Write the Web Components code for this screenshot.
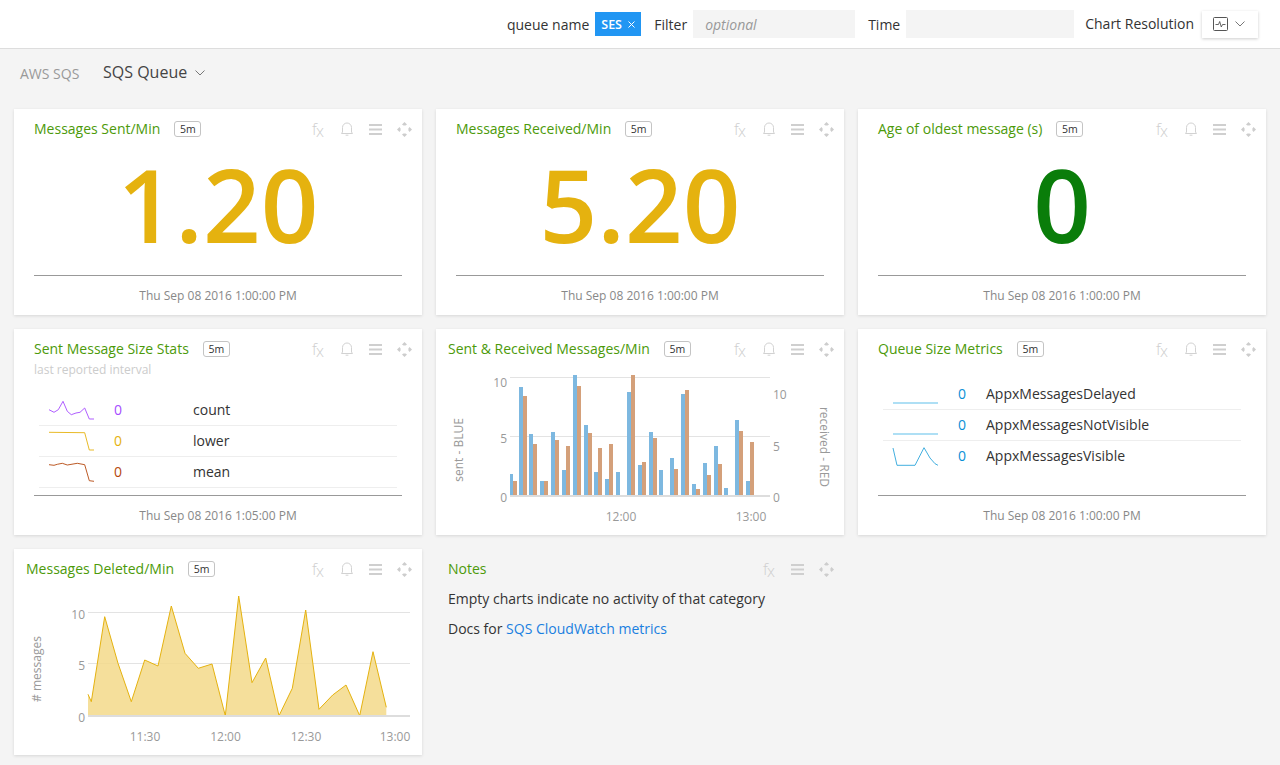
<!DOCTYPE html>
<html>
<head>
<meta charset="utf-8">
<title>SQS Queue</title>
<style>
html, body { margin: 0; padding: 0; background: #f4f4f4; }
body { font-family: "Open Sans", sans-serif; font-size: 14px; color: #333; }
</style>
</head>
<body>
<top-bar></top-bar>
<crumb-bar></crumb-bar>
<dash-grid>
  <dash-card name="Messages Sent/Min" inset="20" badge="5m" footer="Thu Sep 08 2016 1:00:00 PM"><stat-value color="#e5b20f">1.20</stat-value></dash-card>
  <dash-card name="Messages Received/Min" inset="20" badge="5m" footer="Thu Sep 08 2016 1:00:00 PM"><stat-value color="#e5b20f">5.20</stat-value></dash-card>
  <dash-card name="Age of oldest message (s)" inset="20" badge="5m" footer="Thu Sep 08 2016 1:00:00 PM"><stat-value color="#0a7d0a">0</stat-value></dash-card>

  <dash-card name="Sent Message Size Stats" inset="20" badge="5m" footer="Thu Sep 08 2016 1:05:00 PM" subtitle="last reported interval">
    <spark-table top="15" value-col="79">
      <spark-row color="#a64dff" value="0" label="count" points="0,15.7 5,18.3 9.3,15.7 14,7.3 18.3,17.3 22.3,20.7 27,19 31,18.3 35.7,14 40.3,25 45,25"></spark-row>
      <spark-row color="#e5b20f" value="0" label="lower" points="0,7.3 35.7,7.7 40.3,25 45,25"></spark-row>
      <spark-row color="#b5480e" value="0" label="mean" points="0,8.7 5,9.3 8.3,8.3 13.3,7.3 18.3,9 28.3,7.3 35.7,8.7 40.3,24.7 45,25.3"></spark-row>
    </spark-table>
  </dash-card>
  <dash-card name="Sent &amp; Received Messages/Min" inset="12" badge="5m"><bar-chart></bar-chart></dash-card>
  <dash-card name="Queue Size Metrics" inset="20" badge="5m" footer="Thu Sep 08 2016 1:00:00 PM">
    <spark-table top="20" value-col="28">
      <spark-row color="#0a8fd6" line="#4db8e8" value="0" label="AppxMessagesDelayed" points="0,25 45,25"></spark-row>
      <spark-row color="#0a8fd6" line="#4db8e8" value="0" label="AppxMessagesNotVisible" points="0,25 45,25"></spark-row>
      <spark-row color="#0a8fd6" line="#2fa6dc" value="0" label="AppxMessagesVisible" last points="0,8 4,25.3 22,25.3 31,7.7 37,18 42,23.7 45,25.3"></spark-row>
    </spark-table>
  </dash-card>

  <dash-card name="Messages Deleted/Min" inset="12" badge="5m"><area-chart></area-chart></dash-card>
  <dash-card name="Notes" inset="12" plain>
    <div style="padding:0 12px;line-height:20px;color:#333">
      <div style="margin-top:10px">Empty charts indicate no activity of that category</div>
      <div style="margin-top:10px">Docs for <a href="#" style="color:#1a7fe0;text-decoration:none">SQS CloudWatch metrics</a></div>
    </div>
  </dash-card>
</dash-grid>

<script>
// chevron used in a couple of places
const chevron = (w, h) => `<svg width="${w}" height="${h}" viewBox="0 0 10 6" fill="none" stroke="#777" stroke-width="1"><path d="M.5.5 5 5 9.5.5"/></svg>`;

class TopBar extends HTMLElement {
  constructor() {
    super();
    this.attachShadow({ mode: 'open' });
  }

  connectedCallback() {
    this.shadowRoot.innerHTML = `
    <style>
    :host { display: flex; height: 48px; background: #fff; border-bottom: 1px solid #ddd; align-items: center; justify-content: flex-end; padding-right: 22px; box-sizing: content-box; color: #333; font-size: 14px; }
    .lbl { margin-right: 6px; }
    .chip { display: flex; align-items: center; gap: 6px; width: 46px; height: 24px; box-sizing: border-box; padding-left: 6px; background: #2196f3; color: #fff; font-size: 12.5px; font-weight: 600; margin-right: 13px; }
    .box { height: 28px; background: #f4f4f4; box-sizing: border-box; padding-left: 12px; line-height: 30px; color: #999; font-style: italic; }
    .btn { display: flex; align-items: center; gap: 7px; width: 56px; height: 27px; margin-left: 8px; box-sizing: border-box; padding-left: 11px; background: #fff; box-shadow: 0 1px 3px rgba(0,0,0,.2); }
    .res { position: relative; top: -1px; }
    </style>
    <span class="lbl">queue name</span>
    <span class="chip">SES <svg width="7" height="7" viewBox="0 0 7 7" stroke="#fff" stroke-width="1"><path d="M.5.5l6 6M6.500.5l-6 6"/></svg></span>
    <span class="lbl">Filter</span>
    <div class="box" style="width:162px;margin-right:13px">optional</div>
    <span class="lbl">Time</span>
    <div class="box" style="width:168px;margin-right:11px"></div>
    <span class="res">Chart Resolution</span>
    <div class="btn">
      <svg width="15" height="14" viewBox="0 0 15 14" fill="none" stroke="#555"><rect x=".5" y=".5" width="14" height="13" rx="1"/><path d="M2.500 7.500h3l1.200-3 1.600 5.500 1.200-2.500h3" stroke-width=".9"/></svg>
      ${chevron(10, 6)}
    </div>`;
  }
}

class CrumbBar extends HTMLElement {
  constructor() {
    super();
    this.attachShadow({ mode: 'open' });
  }

  connectedCallback() {
    this.shadowRoot.innerHTML = `
    <style>
    :host { display: flex; align-items: center; height: 46px; padding: 1px 0 13px 20px; box-sizing: content-box; }
    .root { color: #999; font-size: 14px; margin-right: 23px; width: 60px; }
    .page { color: #444; font-size: 16px; margin-right: 8px; position: relative; top: -1px; }
    </style>
    <span class="root">AWS SQS</span>
    <span class="page">SQS Queue</span>
    ${chevron(10, 6)}`;
  }
}

class DashGrid extends HTMLElement {
  constructor() {
    super();
    this.attachShadow({ mode: 'open' });
  }

  connectedCallback() {
    this.shadowRoot.innerHTML = `
    <style>
    :host { display: grid; grid-template-columns: repeat(3, 408px); grid-auto-rows: 206px; gap: 14px; padding: 0 14px 10px; }
    </style>
    <slot></slot>`;
  }
}

class DashCard extends HTMLElement {
  constructor() {
    super();
    this.attachShadow({ mode: 'open' });
  }

  connectedCallback() {
    const inset = this.getAttribute('inset') || 20;
    const plain = this.hasAttribute('plain');
    const badge = this.getAttribute('badge');
    const footer = this.getAttribute('footer');
    const subtitle = this.getAttribute('subtitle');
    this.shadowRoot.innerHTML = `
    <style>
    :host { display: flex; flex-direction: column; min-width: 0; background: ${plain ? 'transparent' : '#fff'}; ${plain ? '' : 'box-shadow: 0 1px 3px rgba(0,0,0,.12);'} }
    .head { display: flex; align-items: center; height: 20px; padding: 10px 0 0 ${inset}px; flex: none; }
    .name { color: #4c9a0a; font-size: 14px; line-height: 20px; white-space: nowrap; }
    .badge { margin-left: 14px; width: 27px; height: 16px; box-sizing: border-box; border: 1px solid #c4c4c4; border-radius: 3px; font-size: 10.5px; line-height: 14px; text-align: center; color: #333; }
    .tools { margin-left: auto; margin-right: 3px; display: flex; align-items: center; }
    .tool { width: 29px; height: 20px; display: flex; align-items: center; justify-content: center; }
    .menu { padding-right: 1px; box-sizing: border-box; }
    .fx { color: #cfcfcf; font-size: 16px; font-weight: 300; padding-left: 1px; box-sizing: border-box; }
    .fx i { font-style: normal; position: relative; top: 2px; margin-left: -1px; }
    .sub { padding: 1px 0 0 ${inset}px; color: #ccc; font-size: 12px; line-height: 20px; flex: none; }
    .body { flex: 1; min-height: 0; display: flex; flex-direction: column; }
    .foot { flex: none; height: 40px; margin: 0 ${inset}px; border-top: 1px solid #999; box-sizing: border-box; font-size: 12px; line-height: 39px; color: #888; text-align: center; }
    </style>
    <div class="head">
      <span class="name">${this.getAttribute('name')}</span>
      ${badge ? `<span class="badge">${badge}</span>` : ''}
      <div class="tools">
        <span class="tool fx">f<i>x</i></span>
        ${plain ? '' : `<span class="tool"><svg width="12" height="14" viewBox="0 0 12 14" fill="none" stroke="#d2d2d2"><path d="M1.500 10V5.500a4.500 4.500 0 0 1 9 0V10l1 1.500H.5zM4.600 13.200h2.800"/></svg></span>`}
        <span class="tool menu"><svg width="13" height="11" viewBox="0 0 13 11" fill="#cfcfcf"><rect width="13" height="2"/><rect y="4.500" width="13" height="2"/><rect y="9" width="13" height="2"/></svg></span>
        <span class="tool"><svg width="15" height="15" viewBox="0 0 15 15" fill="#cdcdcd"><path d="M7.500 0 10 2.500 8.500 3.600h-2L5 2.500zM7.500 15 5 12.500l1.500-1.100h2l1.500 1.100zM0 7.500 2.500 5l1.100 1.500v2L2.500 10zM15 7.500 12.500 10l-1.100-1.500v-2L12.500 5z"/></svg></span>
      </div>
    </div>
    ${subtitle ? `<div class="sub">${subtitle}</div>` : ''}
    <div class="body"><slot></slot></div>
    ${footer ? `<div class="foot">${footer}</div>` : ''}`;
  }
}

class StatValue extends HTMLElement {
  constructor() {
    super();
    this.attachShadow({ mode: 'open' });
  }

  connectedCallback() {
    this.shadowRoot.innerHTML = `
    <style>
    :host { flex: 1; display: flex; align-items: center; justify-content: center; padding-bottom: 6px; color: ${this.getAttribute('color')}; font-size: 101px; font-weight: 600; line-height: 101px; }
    </style>
    <slot></slot>`;
  }
}

class SparkTable extends HTMLElement {
  constructor() {
    super();
    this.attachShadow({ mode: 'open' });
  }

  connectedCallback() {
    this.shadowRoot.innerHTML = `
    <style>
    :host { display: block; margin: ${this.getAttribute('top')}px 25px 0; --value-col: ${this.getAttribute('value-col')}px; }
    </style>
    <slot></slot>`;
  }
}

class SparkRow extends HTMLElement {
  constructor() {
    super();
    this.attachShadow({ mode: 'open' });
  }

  connectedCallback() {
    const color = this.getAttribute('color');
    const line = this.getAttribute('line') || color;
    const last = this.hasAttribute('last');
    this.shadowRoot.innerHTML = `
    <style>
    :host { display: grid; grid-template-columns: 75px var(--value-col) 1fr; align-items: center; height: 31px; padding-bottom: ${last ? 2 : 1}px; box-sizing: border-box; ${last ? '' : 'border-bottom: 1px solid #eee;'} }
    svg { margin-left: 10px; display: block; overflow: visible; opacity: .9; margin-block: -1px; }
    .val { color: ${color}; }
    .lbl { color: #333; }
    </style>
    <svg width="45" height="31" viewBox="0 0 45 31" fill="none" stroke="${line}" stroke-width="1"><polyline points="${this.getAttribute('points')}"/></svg>
    <span class="val">${this.getAttribute('value')}</span>
    <span class="lbl">${this.getAttribute('label')}</span>`;
  }
}

const axisStyle = `
    :host { display: block; }
    svg { display: block; }
    text { font-family: "Open Sans", sans-serif; font-size: 12px; fill: #999; dominant-baseline: central; }`;

class BarChart extends HTMLElement {
  constructor() {
    super();
    this.attachShadow({ mode: 'open' });
  }

  connectedCallback() {
    // [x, top of blue, top of orange], read off the 3x crop
    const data = [[219,342,363],[249,81,108],[279,222,252],[312,363,363],[345,216,240],[378,330,258],[411,45,78],[444,195,219],[474,336,264],[507,357,252],[540,336,0],[573,96,45],[606,315,306],[639,216,234],[669,330,0],[702,294,327],[735,102,90],[768,372,387],[801,309,345],[834,258,312],[864,384,0],[897,180,213],[930,363,246]];
    const base = 405 / 3 + 1;
    let bars = '';
    data.forEach(([x, b, o]) => {
      const bx = Math.max(x / 3, 74);
      const bw = x / 3 + 4 - bx;
      bars += `<rect x="${bx}" y="${b / 3 + 1}" width="${bw}" height="${base - b / 3 - 1}" fill="#7db8e0"/>`;
      if (o) bars += `<rect x="${x / 3 + 4}" y="${o / 3 + 1}" width="4" height="${base - o / 3 - 1}" fill="#d4a07a"/>`;
    });
    this.shadowRoot.innerHTML = `
    <style>${axisStyle}</style>
    <svg width="408" height="176" viewBox="0 0 408 176">
      <path d="M74 18.5h260M74 77.5h260" stroke="#e3e3e3"/>
      ${bars}
      <path d="M74 137h260" stroke="#ddd" stroke-width="2"/>
      <text x="71" y="23" text-anchor="end">10</text>
      <text x="71" y="79" text-anchor="end">5</text>
      <text x="71" y="138" text-anchor="end">0</text>
      <text x="337" y="35">10</text>
      <text x="337" y="87">5</text>
      <text x="337" y="138">0</text>
      <text x="185" y="157" text-anchor="middle">12:00</text>
      <text x="315" y="157" text-anchor="middle">13:00</text>
      <text transform="translate(22 91) rotate(-90)" text-anchor="middle">sent - BLUE</text>
      <text transform="translate(388 88) rotate(90)" text-anchor="middle">received - RED</text>
    </svg>`;
  }
}

class AreaChart extends HTMLElement {
  constructor() {
    super();
    this.attachShadow({ mode: 'open' });
  }

  connectedCallback() {
    const pts = [[222,433],[232,455],[272,200],[312,340],[352,455],[392,330],[432,348],[472,168],[513,310],[553,355],[594,342],[634,497],[674,138],[714,398],[755,324],[795,497],[835,415],[875,180],[915,478],[956,435],[996,405],[1037,497],[1077,305],[1117,472]]
      .map(([x, y]) => `${(x / 3).toFixed(1)},${(y / 3 - 29).toFixed(1)}`);
    const base = 497 / 3 - 29;
    this.shadowRoot.innerHTML = `
    <style>${axisStyle}</style>
    <svg width="408" height="176" viewBox="0 0 408 176">
      <path d="M74 33.5h322M74 84.5h322" stroke="#e3e3e3"/>
      <polygon points="74,${base} ${pts.join(' ')} 372.3,${base}" fill="#f3d98a" fill-opacity=".85"/>
      <polyline points="${pts.join(' ')}" fill="none" stroke="#e5b20f" stroke-width="1"/>
      <path d="M74 137h322" stroke="#ddd" stroke-width="2"/>
      <text x="71" y="35" text-anchor="end">10</text>
      <text x="71" y="86" text-anchor="end">5</text>
      <text x="71" y="138" text-anchor="end">0</text>
      <text x="131" y="157" text-anchor="middle">11:30</text>
      <text x="211.500" y="157" text-anchor="middle">12:00</text>
      <text x="292" y="157" text-anchor="middle">12:30</text>
      <text x="381" y="157" text-anchor="middle">13:00</text>
      <text transform="translate(22 90) rotate(-90)" text-anchor="middle"># messages</text>
    </svg>`;
  }
}

customElements.define('top-bar', TopBar);
customElements.define('crumb-bar', CrumbBar);
customElements.define('dash-grid', DashGrid);
customElements.define('dash-card', DashCard);
customElements.define('stat-value', StatValue);
customElements.define('spark-table', SparkTable);
customElements.define('spark-row', SparkRow);
customElements.define('bar-chart', BarChart);
customElements.define('area-chart', AreaChart);
</script>
</body>
</html>
